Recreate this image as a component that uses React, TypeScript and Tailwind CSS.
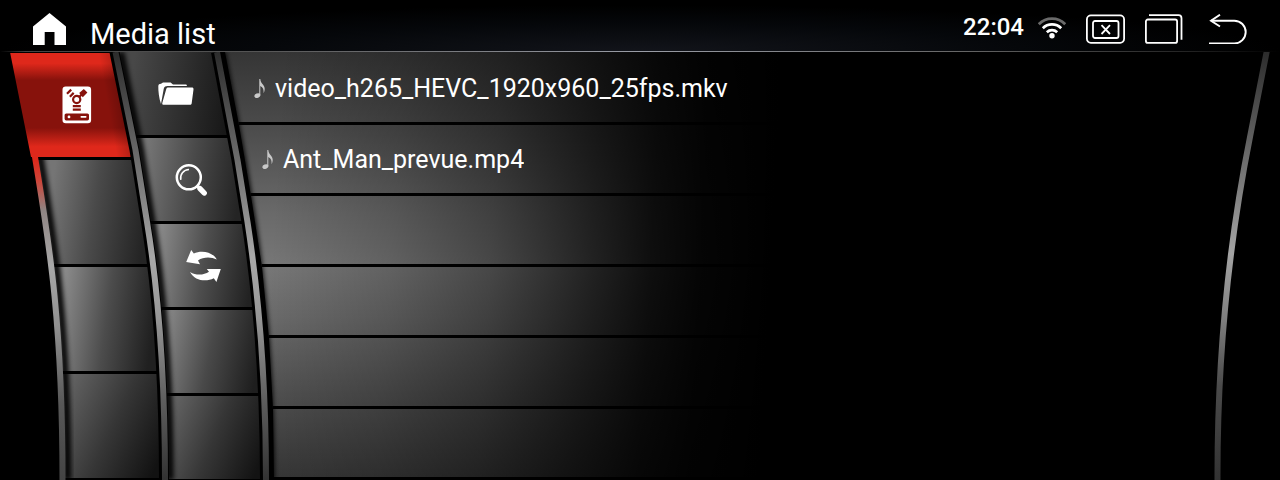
import type { ReactNode } from "react";

function HomeIcon() {
  return (
    <svg className="block h-8 w-[33px]" viewBox="0 0 33 32" fill="#fff" aria-hidden="true">
      <path d="M16.5 0 33 13.6V32H21.5V19H11.7V32H0V13.6Z" />
    </svg>
  );
}

function WifiIcon() {
  return (
    <svg className="h-6 w-7" viewBox="0 0 28 24" fill="none" stroke="#fff" strokeWidth="2.7" role="img" aria-label="Wi-Fi">
      <path d="M.8 9.2a18.4 18.4 0 0 1 26.4 0" stroke="#6a6a6a" />
      <path d="M4.8 13.2a13 13 0 0 1 18.4 0" />
      <path d="M8.8 17.2a7.6 7.6 0 0 1 10.4 0" />
      <circle cx="14" cy="20.8" r="2.7" fill="#fff" stroke="none" />
    </svg>
  );
}

function ScreenOffIcon() {
  return (
    <svg className="block h-[30px] w-[39px]" viewBox="0 0 39 30" fill="none" stroke="#fff" strokeWidth="1.8" aria-hidden="true">
      <rect x="0.9" y="1.4" width="37.2" height="27.4" rx="4" />
      <rect x="7" y="7" width="25.5" height="17" rx="2" />
      <path d="m15.5 11.2 8.5 8.8m0-8.800-8.500 8.800" />
    </svg>
  );
}

function RecentsIcon() {
  return (
    <svg className="block h-[30px] w-[38px]" viewBox="0 0 38 30" fill="none" stroke="#fff" strokeWidth="1.8" aria-hidden="true">
      <rect x="0.9" y="5.5" width="31.2" height="23.4" rx="2" />
      <path d="M4 1.200h29.500a3 3 0 0 1 3 3v21.600" />
    </svg>
  );
}

function BackIcon() {
  return (
    <svg className="block h-[30px] w-11" viewBox="0 0 44 30" fill="none" stroke="#fff" strokeWidth="1.9" aria-hidden="true">
      <path d="M8 6.700h23.300a11.400 11.400 0 0 1 0 22.800H6" />
      <path d="M17 .7 8 6.700l9 5.800" />
    </svg>
  );
}

function DriveIcon() {
  return (
    <svg className="block h-[38px] w-[30px]" viewBox="0 0 30 38" aria-hidden="true">
      <rect x="0.5" y="0.5" width="28.6" height="36.8" rx="3.2" fill="#fff" />
      <g fill="none" stroke="#87120c">
        <circle cx="14.7" cy="13.5" r="3.6" strokeWidth="2.2" />
        <path d="M10.800 20.200h8M10.800 23.600h8" strokeWidth="2.2" />
        <path d="m5 7.800 4.200-4.200M7.900 10.700l3.800-3.800M17.400 10.800l2.400-2.400" strokeWidth="2.2" />
      </g>
      <path d="m17.200 7 4.600-4 3.600 3.600-4.600 4.600Z" fill="#87120c" />
      <rect x="2.6" y="27.4" width="24.4" height="7" rx="1.6" fill="#87120c" />
      <circle cx="7" cy="30.9" r="1.4" fill="#fff" />
      <rect x="18.5" y="30" width="6" height="1.8" rx="0.8" fill="#fff" />
    </svg>
  );
}

function FolderIcon() {
  return (
    <svg className="block h-6 w-9" viewBox="0 0 36 24" fill="#fff" aria-hidden="true">
      <path d="M3 22C1 16 .2 9 .3 4.2 .4 2.4 1.4 2 3 1.8L5 .6h7.6l2.4 1.900h12.600c1 0 1.400.600 1.300 1.600H9.600c-2 0-3.200.700-3.800 2.400Z" />
      <path d="M10.300 5.600h23.400c1.400 0 1.900.600 1.800 1.900l-1.800 13.800c-.2 1.100-.8 1.500-1.800 1.500H6c-1.400 0-2-.5-1.700-1.800L8.200 7.300c.3-1.200.9-1.700 2.100-1.700Z" />
    </svg>
  );
}

function SearchIcon() {
  return (
    <svg className="block h-8 w-8" viewBox="0 0 32 32" fill="none" stroke="#fff" aria-hidden="true">
      <circle cx="13.8" cy="13.3" r="12" strokeWidth="2.5" />
      <path d="M5.800 15.800A8.600 8.600 0 0 1 14 5.400" strokeWidth="1.5" />
      <path d="m22 21.600 2.600 2.600" strokeWidth="3.2" />
      <path d="m25 24.600 4.200 4.400" strokeWidth="5.4" strokeLinecap="round" />
    </svg>
  );
}

function SyncIcon() {
  return (
    <svg className="block h-8 w-[35px]" viewBox="0 0 35 32" fill="#fff" aria-hidden="true">
      <path d="M.2 12 5.2 0l2.6 3.400C14.600.2 26 .8 30.800 9.600 25 6.600 17.400 6.800 12 10.400l2 3.800Z" />
      <path d="m34.800 19-4.400 13-2.600-3.700C20.400 32 8.800 31.200 4 22c6 3.600 13.600 3.400 19-.2L20.800 19Z" />
    </svg>
  );
}

function NoteIcon() {
  return (
    <svg className="h-5 w-3 shrink-0" viewBox="0 0 12 20" fill="#c9c9c9" aria-hidden="true">
      <ellipse cx="3.4" cy="16.600" rx="3.1" ry="2.2" transform="rotate(-22 3.4 16.600)" />
      <path d="M5.300 0h1c.2 3.200 1.600 4.200 3 6 2 2.600 1.800 5.400.2 8.300.5-3.600-.4-6-3.200-7.400V16.300h-1Z" />
    </svg>
  );
}

type Cell = { id: string; label?: string; icon?: ReactNode; look: string };

const sources: Cell[] = [
  {
    id: "drive",
    label: "Storage drive",
    icon: <DriveIcon />,
    look: "ml-[10px] w-[123px] pl-[10px] bg-[linear-gradient(260deg,rgba(0,0,0,0.35)_8px,transparent_34px),linear-gradient(180deg,#df281b_10%,#87120c_26%,#87120c_72%,#df281b_90%)]",
  },
  { id: "source-2", look: "ml-[38px] w-[112px] bg-[linear-gradient(98deg,#757575_14%,#4a4a4a_50%,#242424_92%)]" },
  { id: "source-3", look: "ml-[54px] w-[105px] bg-[linear-gradient(98deg,#8a8a8a_10%,#4c4c4c_50%,#202020_90%)]" },
  { id: "source-4", look: "ml-[63px] w-[100px] bg-[linear-gradient(115deg,#636363_6%,#363636_50%,#121212_92%)]" },
];

const tools: Cell[] = [
  { id: "browse", label: "Browse folders", icon: <FolderIcon />, look: "ml-[1px] w-[117px] bg-[linear-gradient(98deg,#484848_14%,#2f2f2f_55%,#181818_92%)]" },
  { id: "search", label: "Search", icon: <SearchIcon />, look: "ml-[20px] w-[109px] bg-[linear-gradient(98deg,#757575_10%,#4a4a4a_50%,#242424_92%)]" },
  { id: "refresh", label: "Refresh", icon: <SyncIcon />, look: "ml-[33px] w-[108px] bg-[linear-gradient(98deg,#898989_10%,#4e4e4e_50%,#222222_92%)]" },
  { id: "tool-4", look: "ml-[42px] w-[104px] bg-[linear-gradient(102deg,#888888_8%,#494949_50%,#1e1e1e_92%)]" },
  { id: "tool-5", look: "ml-[48px] w-[100px] bg-[linear-gradient(112deg,#666666_6%,#363636_50%,#131313_92%)]" },
];

const tracks = [
  { name: "video_h265_HEVC_1920x960_25fps.mkv", inset: "pl-[33px]" },
  { name: "Ant_Man_prevue.mp4", inset: "pl-[41px]" },
  { name: "", inset: "" },
  { name: "", inset: "" },
  { name: "", inset: "" },
  { name: "", inset: "" },
];

const RAIL_LEFT = "M30.500 80L35 105C47 180 62.500 260 62.500 428";
const RAIL_MIDDLE = "M115.500 0L135.500 98L147 170Q165 280 165 428";
const RAIL_RIGHT = "M217 0L237.500 108L247.500 170Q266 290 266 428";

function Rails() {
  return (
    <svg className="pointer-events-none absolute top-0 left-0 h-[428px] w-[280px]" viewBox="0 0 280 428" fill="none" aria-hidden="true">
      <defs>
        <linearGradient id="steel" gradientUnits="userSpaceOnUse" x1="0" y1="0" x2="0" y2="428">
          <stop offset="0" stopColor="#2c2c2c" />
          <stop offset="0.25" stopColor="#6c6c6c" />
          <stop offset="0.48" stopColor="#a8a8a8" />
          <stop offset="0.62" stopColor="#979797" />
          <stop offset="0.82" stopColor="#5c5c5c" />
          <stop offset="1" stopColor="#333" />
        </linearGradient>
        <linearGradient id="hot" gradientUnits="userSpaceOnUse" x1="0" y1="0" x2="0" y2="428">
          <stop offset="0.25" stopColor="#df281b" />
          <stop offset="0.3" stopColor="#cf4438" />
          <stop offset="0.37" stopColor="#8f8583" />
          <stop offset="0.5" stopColor="#a8a8a8" />
          <stop offset="0.65" stopColor="#8e8e8e" />
          <stop offset="0.82" stopColor="#585858" />
          <stop offset="1" stopColor="#444" />
        </linearGradient>
        <filter id="soft" x="-20%" y="-5%" width="140%" height="110%">
          <feGaussianBlur stdDeviation="2.6" />
        </filter>
        <clipPath id="below">
          <rect y="105" width="280" height="323" />
        </clipPath>
      </defs>
      <g stroke="#000" strokeWidth="7">
        <g clipPath="url(#below)">
          <path d={RAIL_LEFT} transform="translate(5 0)" filter="url(#soft)" />
        </g>
        <path d={RAIL_MIDDLE} transform="translate(5 0)" filter="url(#soft)" />
        <path d={RAIL_RIGHT} transform="translate(5 0)" filter="url(#soft)" />
      </g>
      <g stroke="#000">
        <path d={RAIL_MIDDLE} transform="translate(-1 0)" strokeWidth="10" />
        <path d={RAIL_RIGHT} strokeWidth="12" />
      </g>
      <path d={RAIL_LEFT} stroke="url(#hot)" strokeWidth="6" clipPath="url(#below)" />
      <path d={RAIL_MIDDLE} stroke="url(#steel)" strokeWidth="6" />
      <path d={RAIL_RIGHT} stroke="url(#steel)" strokeWidth="6" />
    </svg>
  );
}

function EdgeRail() {
  return (
    <svg className="h-[428px] w-[70px] shrink-0" viewBox="0 0 70 428" fill="none" aria-hidden="true">
      <defs>
        <linearGradient id="edge" gradientUnits="userSpaceOnUse" x1="0" y1="0" x2="0" y2="428">
          <stop offset="0" stopColor="#2c2c2c" />
          <stop offset="0.25" stopColor="#6c6c6c" />
          <stop offset="0.47" stopColor="#a4a4a4" />
          <stop offset="0.62" stopColor="#808080" />
          <stop offset="0.78" stopColor="#4a4a4a" />
          <stop offset="1" stopColor="#333" />
        </linearGradient>
      </defs>
      <path d="M57 -2L40 85Q7 250 7.500 428" stroke="url(#edge)" strokeWidth="6" />
    </svg>
  );
}

function CellColumn({ label, cells, frame, size }: { label: string; cells: Cell[]; frame: string; size: string }) {
  return (
    <nav aria-label={label} className={`h-[428px] shrink-0 overflow-hidden ${frame}`}>
      {cells.map((cell) => (
        <button
          key={cell.id}
          type="button"
          disabled={!cell.icon}
          aria-label={cell.label ?? "Empty slot"}
          className={`flex items-center justify-center border-b-[3px] border-black ${size} ${cell.look}`}
        >
          {cell.icon}
        </button>
      ))}
    </nav>
  );
}

export default function App() {
  return (
    <div className="flex min-h-screen flex-col bg-black font-[Roboto,'Liberation_Sans',sans-serif] text-white">
      <header className="flex h-[51px] items-start bg-[radial-gradient(ellipse_50%_90%_at_50%_100%,#12141a,#05070a_60%,#000)] pr-[33px] pl-[33px]">
        <button type="button" aria-label="Home" className="mt-[13px]">
          <HomeIcon />
        </button>
        <h1 className="mt-[14px] ml-6 text-[29px] leading-10">Media list</h1>
        <div className="mt-[14px] ml-auto flex items-start gap-5">
          <div className="-mt-[3px] flex items-center gap-[14px]">
            <time className="text-2xl leading-8 font-medium">22:04</time>
            <WifiIcon />
          </div>
          <button type="button" aria-label="Turn screen off">
            <ScreenOffIcon />
          </button>
          <button type="button" aria-label="Recent apps">
            <RecentsIcon />
          </button>
          <button type="button" aria-label="Back">
            <BackIcon />
          </button>
        </div>
      </header>
      <div className="h-px bg-[linear-gradient(90deg,transparent,#444_2%,#555_20%,#9a9da6_50%,#666_75%,#222_93%,transparent)]" />

      <main className="relative flex flex-1 items-start overflow-hidden">
        <CellColumn
          label="Sources"
          cells={sources}
          size="h-[107px]"
          frame="w-[165px] pt-px [clip-path:polygon(10px_0,112px_0,133px_98px,145px_170px,154px_240px,160px_320px,162px_428px,62px_428px,60px_330px,55px_250px,45px_170px,36px_106px,31px_105px)]"
        />
        <CellColumn
          label="Tools"
          cells={tools}
          size="h-[86px]"
          frame="-ml-[49px] w-[150px] [clip-path:polygon(0_0,98px_0,120px_108px,130px_170px,142px_260px,148px_360px,150px_428px,48px_428px,46px_340px,38px_250px,30px_170px,19px_98px)]"
        />
        <ul className="-ml-[45px] min-w-0 flex-1 bg-[linear-gradient(93deg,transparent_60px,rgba(0,0,0,0.18)_180px,rgba(0,0,0,0.4)_280px,rgba(0,0,0,0.71)_380px,rgba(0,0,0,0.88)_440px,rgba(0,0,0,0.96)_490px,#000_560px),linear-gradient(180deg,#353535,#4c4c4c_18%,#6a6a6a_38%,#777777_50%,#6a6a6a_62%,#505050_80%,#363636)] pt-[2px] [clip-path:polygon(4px_0,18px_73px,30px_144px,41px_215px,48px_286px,52px_357px,53px_428px,100%_428px,100%_0)]">
          {tracks.map((track, i) => (
            <li key={i} className="h-[71px] border-b-[3px] border-black">
              {track.name && (
                <button type="button" className={`flex h-full w-full items-center gap-[9px] pt-[2px] text-left text-[25px] leading-8 ${track.inset}`}>
                  <NoteIcon />
                  <span className="truncate">{track.name}</span>
                </button>
              )}
            </li>
          ))}
        </ul>
        <EdgeRail />
        <Rails />
      </main>
    </div>
  );
}
